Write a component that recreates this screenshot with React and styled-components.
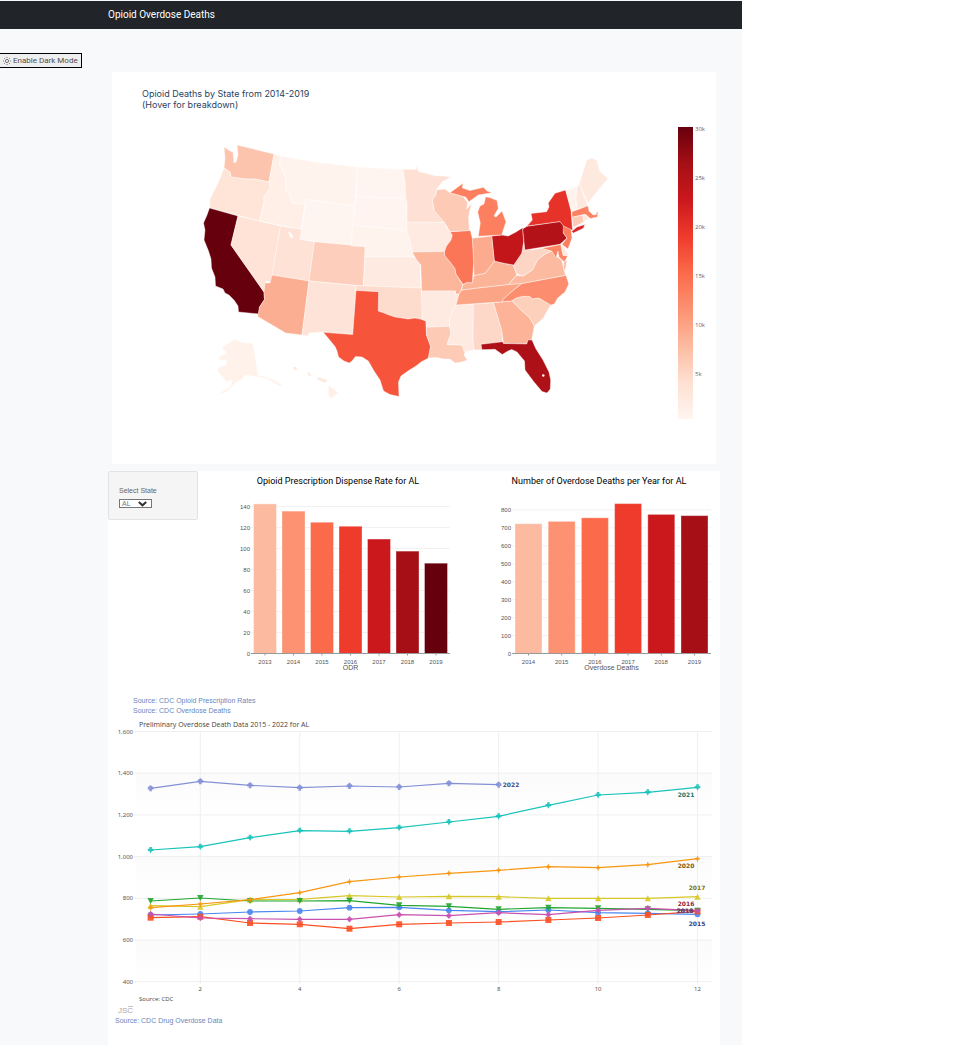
import React, { useState } from "react";
import styled, { createGlobalStyle } from "styled-components";

const GlobalStyle = createGlobalStyle`
  * { box-sizing: border-box; }
  body {
    margin: 0;
    background: #ffffff;
    font-family: "Liberation Sans", Arial, sans-serif;
  }
`;

const verdana = `"DejaVu Sans", Verdana, sans-serif`;
const noto = `"Noto Sans", "Open Sans", sans-serif`;
const openSans = `"Open Sans", "Noto Sans", sans-serif`;
const roboto = `Roboto, "Liberation Sans", sans-serif`;

const Shell = styled.div`
  display: flex;
  flex-direction: column;
  width: 100%;
  max-width: 742px;
  min-height: 100vh;
  padding-top: 1px;
  background: #f8f9fb;
`;

const NavBar = styled.header`
  display: flex;
  align-items: center;
  height: 28px;
  padding-left: 108px;
  background: #212529;
`;

const Brand = styled.h1`
  margin: 0;
  font: 400 10px/14px ${roboto};
  color: #ffffff;
`;

const Toolbar = styled.div`
  display: flex;
  padding-top: 24px;
`;

const ModeButton = styled.button`
  display: flex;
  align-items: center;
  gap: 2px;
  height: 15px;
  padding: 0 3px;
  border: 1px solid #000000;
  border-left: 0;
  background: #efefef;
  color: #4d4d4d;
  font: 400 8px/12px ${roboto};
`;

const Content = styled.main`
  display: flex;
  flex: 1;
  flex-direction: column;
  gap: 7px;
  padding: 4px 22px 0 108px;
`;

const MapCard = styled.section`
  margin: 0 4px;
  padding-top: 16px;
  background: #ffffff;
`;

const MapTitle = styled.h2`
  margin: 0 0 0 30px;
  font: 400 9px/11px Inter, "DejaVu Sans", sans-serif;
  color: #2a3f5f;
`;

const Drawing = styled.svg`
  display: block;
  width: 100%;
  height: auto;
`;

const Dashboard = styled.section`
  flex: 1;
  padding-bottom: 16px;
  background: #ffffff;
`;

const ChartRow = styled.div`
  display: grid;
  grid-template-columns: 90px 1fr 1fr;
  align-items: start;
`;

const Panel = styled.form`
  display: flex;
  flex-direction: column;
  align-items: flex-start;
  gap: 4px;
  height: 49px;
  padding: 14px 10px 0;
  border: 1px solid #e3e3e3;
  border-radius: 2px;
  background: #f5f5f5;
`;

const FieldLabel = styled.label`
  font-size: 7px;
  line-height: 9px;
  color: #666666;
`;

const SelectBox = styled.div`
  position: relative;
  width: 33px;
  height: 9px;
`;

const StateSelect = styled.select`
  display: block;
  appearance: none;
  width: 100%;
  height: 100%;
  padding: 0 2px;
  border: 1px solid #767676;
  border-radius: 0;
  background: #ffffff;
  font: 400 7px/7px "Liberation Sans", Arial, sans-serif;
  color: #777777;
`;

const Chevron = styled.svg`
  position: absolute;
  top: 2px;
  right: 5px;
  width: 9px;
  height: 6px;
  pointer-events: none;
`;

const SourceLinks = styled.nav`
  display: flex;
  flex-direction: column;
  align-items: flex-start;
  padding: ${(p) => p.$pad};
`;

const SourceLink = styled.a`
  font-size: 7px;
  line-height: 10px;
  color: #6a86bd;
  text-decoration: none;
`;

const SvgText = styled.text`
  font-family: ${(p) => p.$family || `"Liberation Sans", Arial, sans-serif`};
  font-size: ${(p) => p.$size || 6}px;
  font-weight: ${(p) => p.$weight || 400};
  text-anchor: ${(p) => p.$anchor || "middle"};
  fill: ${(p) => p.$color || "#555555"};
`;

/* Outline of every state, with its fill on the Reds scale. */
const STATES = [
  ["WA", "#fcc4ad", "224,147 230,151 233,152 234,163 236,162 238,155 237,145 274,154 269,182 255,179 245,179 231,177 230,172 224,168 225,158"],
  ["OR", "#fee5d8", "224,168 230,172 231,177 245,179 255,179 269,182 270.5,187 263.5,198 264.5,200 259.5,221 209.5,208 210,199 216,187 221,176"],
  ["CA", "#67000d", "209.5,208 238,216 231,245 264,292 264.5,299.5 259.5,307 259,314 238.5,312 238,306 234,300 229,295 225,293 223,289 215.5,286 215,277 211.5,268 211,259 208.5,251 204,240 205,230 203.5,223 207,215"],
  ["NV", "#fee3d6", "238,216 280.5,226 271,282 266,281 264,292 231,245"],
  ["ID", "#ffefe7", "274,154 280.5,156 279.5,164 283,172 286.5,180 285,190 289,193 292.5,203.5 305,204 301,229.5 259.5,221 264.5,200 263.5,198 270.5,187 269,182"],
  ["MT", "#fff3ee", "280.5,156 315,162 357.5,167 354.8,206 306,199.5 305,204 292.5,203.5 289,193 285,190 286.5,180 283,172 279.5,164"],
  ["WY", "#fff5f0", "306,199.5 354.8,206 351.5,246 300,239.5"],
  ["UT", "#fee2d5", "280.5,226 301.5,229.5 300,239.5 314.5,241.7 309,281 272,275"],
  ["CO", "#fdcebb", "314.5,241.7 365.2,246.5 363.3,286 309,281"],
  ["AZ", "#fcae92", "272,275 309,281 302,335 285.7,333 257.7,316.5 259.5,307 264.5,299.5 264,292 265,283 270,283"],
  ["NM", "#fee4d8", "309,281 356,285.5 352.7,334.5 323,332 309,333 308,336 302,335"],
  ["ND", "#fff5f0", "357.5,167 403,169.3 405,182 406.3,198.4 356.2,196.7"],
  ["SD", "#fff4ef", "356.2,196.7 406.3,198.4 407,203 407,231 403,231 398,229.5 352.6,225.3"],
  ["NE", "#fff3ed", "352.6,225.3 398,229.5 403,231 407.5,231.5 410,240 414.5,257 365,257 365.2,246.5 351.5,246"],
  ["KS", "#feeae0", "365,257 414.5,257 417,260 420,264 421,288 363.3,286"],
  ["OK", "#fddccd", "356,285.5 421,288 422.3,300 422.3,319.5 415,318 408,319 402,318 395,317 389,315 384,313 378.3,311 378.6,291.7 356,290.5"],
  ["TX", "#f6553c", "356,290.5 378.6,291.7 378.3,311 384,313 389,315 395,317 402,318 408,319 415,318 422.3,319.5 426,321 426.5,335 430.7,346.5 428.5,358 421,362 416,366 408,371 401,376 398.5,382 399,396.5 390,394.5 383.5,391 380,380 374,371 368.3,361 362,357 355.5,356.5 352,361 349.3,363 344,361 338.5,357 337,351 335,346.5 323.3,332.3 352.7,334.5"],
  ["MN", "#fee1d4", "403,169.3 416,169.3 416.3,165.7 418.5,171.5 425,173 435,175.7 443,176 451,177 442,182 436.5,189.5 436,195 432.3,200 434,210 444.3,222.3 407,222.3 407,203 405.8,198 405,182"],
  ["IA", "#feeae0", "407,222.3 444.3,222.3 446.7,228 452.3,235 451,240 446.5,246 444.5,251.5 412.3,252 410,240 407,231"],
  ["MO", "#fcb69b", "412.3,252 444.5,251.5 445,256 450,262 455,268.5 456,274 462.7,285 460,293.5 455.5,294.5 455.5,291 421.7,291 420.8,265 416,259"],
  ["AR", "#feeae1", "421.3,291 455.5,291 455.5,294.5 459,294.3 456,305 452,312 449.3,320 449.6,326.3 426.3,327.3 426,321 422.3,319.5"],
  ["LA", "#fdcab5", "426.3,327.3 449.6,326.3 451,333.5 447,344.5 462,345 465,352 464,355 467.3,360 462,362 455,363 450,359 443,359 437,357.5 428.3,358 430.7,346.5 426.5,335"],
  ["MS", "#feeae1", "456,305 473.3,304 473,340 474.2,350 464.3,352 462,345 447,344.5 451,333.5 449.6,326.3 449.3,320 452,312"],
  ["AL", "#fdd8c8", "473.3,304 493.5,302.8 501.7,330 502.5,342 481.5,344 482.3,349.7 474.2,350 473,340"],
  ["GA", "#fcb398", "493.5,302.8 511.7,300.8 522,311 530,318 534.3,326 531.7,340 527.5,341 526.7,344 503.5,343 501.7,330"],
  ["FL", "#ad1117", "481,344.3 502.5,341.8 503.5,343.5 526.7,344 528,340 532,340 536,349 543,360 549,372 550.7,380 550.3,389 547,393 542,391.5 534,382 525,370 524.5,361 517,352 511.7,349.5 508,351 502.3,354.5 495,349.3 482,349.7"],
  ["SC", "#fdd0bc", "511.7,300.8 516,298 523,296.3 530,296.5 532.3,298.8 539,298 550.7,305 546,313 543.5,318 534.3,326 530,318 522,311"],
  ["NC", "#fc8d6e", "502.7,299.5 510,293 521.7,283.5 566,275.3 568.8,284 565,292 557.7,298 554.3,304 550.7,305 539,298 532.3,298.8 530,296.5 523,296.3 516,298 511.7,300.8 502.7,301.8"],
  ["TN", "#fca486", "461.7,290 475,288.3 508.3,284.5 521.7,283.3 510,293 502.7,299.5 502.7,301.8 456,305 459,294.3"],
  ["KY", "#fcb499", "462.7,285 467,282.5 472.3,282.7 474,275.5 485,273.3 490,267 494.3,261 505,263.5 513.3,265 516.7,275 508.3,284.5 475,288.3 461.7,290"],
  ["VA", "#fcbaa0", "508.3,284.5 516.7,275.5 523.3,276 532.3,270 537.5,260 545,254 551.7,251 556,256 561.7,260 563,266 565.5,275.3 521.7,283.5"],
  ["WV", "#fdd5c4", "523,243 524.5,250 534.3,249.5 541.7,248.3 551.7,251 545,254 537.5,260 532.3,270 523.3,276 516.7,274 513.3,265 519,256"],
  ["OH", "#c2161b", "491.7,236 501.7,235 508.3,236 516,232 522.7,227.7 523.7,241.7 521.7,253.3 513.8,265 505,263.5 494.3,261"],
  ["IN", "#fcab8f", "472.3,238.3 491.7,236 494.3,261 490,267 485,273.3 474,275.5 473.5,262"],
  ["IL", "#fb7656", "450,231.7 470.3,230.4 472.3,238.3 473.7,262 472.3,282.7 467,282.5 463,284.5 456,274 455,268.5 450,262 445,256 444.5,251.5 446.5,246 451,240 452.3,235"],
  ["WI", "#fdcab5", "436.5,190 445,189 450,192.7 463.3,196.7 467.7,203 466.7,209 471.7,203.5 469.5,212 468.5,218 469.5,230.5 450,231.7 444.3,222.3 434.5,211 432.3,200 436,195"],
  ["MI", "#fc7f5f", "450,192.7 463,183.3 462.3,188 470,190.5 483.5,187.3 487,191 492.3,192.7 478.3,195 469,201.7 465.7,197 463.3,196.5"],
  ["MI-lower", "#fc7f5f", "485.7,196.7 491,198 497,200.5 498.3,208.3 494,216 496,217 502,211 506,221.7 501.7,235 478.3,236.3 480.3,223 477.7,212 480,206 484,204"],
  ["PA", "#b31218", "522.7,229 527,226.2 560,221.5 565,226.5 563.3,233 567,238 560,244.3 524.8,250"],
  ["NY", "#e63228", "527,226 532.3,220 531,213.5 546.7,211.7 549,207 548.3,203 555,193.3 565.7,190 571,210 572.5,230 570,230 563.3,226 560,221.5"],
  ["LI", "#d9262b", "571.5,231.5 577,227 584.8,224.5 583.5,228.2 573.5,233"],
  ["VT", "#fff3ee", "565.7,190 577.3,186.7 576,197 577.3,209 571.3,211"],
  ["NH", "#fee7dc", "577.3,186.7 579.3,183.3 586.7,203.3 587.3,206 577.3,209 576,197"],
  ["ME", "#fee9df", "579.3,183.3 583.3,171 586.7,160 591.7,158 596.7,160 600,171.7 608.3,178.5 598.3,190 587.7,203.5"],
  ["MA", "#fc8161", "572,211.7 588,205.8 589,211 593,215 596.5,214.5 596.2,211.7 597.8,212.5 597.5,217 590.5,218.5 585,214.3 572,217.3"],
  ["CT", "#fdcbb6", "572,217.3 582.7,215 584,221.7 573.3,227.5"],
  ["RI", "#feeae0", "582.7,215 586.7,215 589,218.5 584,221.7"],
  ["NJ", "#fc7e5e", "563.3,226 571,229.5 572,238 568,249 562,244.5 567,238 563.3,233"],
  ["DE", "#feeae0", "561,245 564,247 568.3,254 567,256 563.5,255.3"],
  ["MD", "#fc8565", "541.7,248.3 560.7,244.5 563,255.5 567.7,256 564.5,262 559,257 558,251 556,258 551.7,251"],
  ["VA-east", "#fcbaa0", "564,261.5 567,260.5 565,271 563.5,268"],
  ["AK", "#fff2eb", "235,339.3 243,342.7 252.7,343.3 258.3,375 266.7,377 273,379 282.3,385 280,386.5 268,379 257,376.7 245,375 241,380 236.7,381.7 226.7,391.7 216.7,395 231,386 232,380 226,382 222,376 217,371 219,367 226,365 226.7,360 220,360 218.3,356.7 226.7,353.3 221.7,347.3"],
  ["HI-1", "#ffe8dd", "292.5,367.5 296,366.5 297.5,369 295,370.5"],
  ["HI-2", "#ffe8dd", "307,372 309.5,372.5 312,376.5 308.5,376"],
  ["HI-3", "#ffe8dd", "316.5,377 322,378 328,380.5 325,383 319,380.5"],
  ["HI-4", "#ffefe7", "328.5,386 334,389 338.5,393 331,398.7 328.5,396"],
];

const REDS = ["#67000d", "#a50f15", "#cb181d", "#ef3b2c", "#fb6a4a", "#fc9272", "#fcbba1", "#fee0d2", "#fff5f0"];

function StateMap() {
  const ticks = ["30k", "25k", "20k", "15k", "10k", "5k"];
  return (
    <Drawing viewBox="112 110 604 354" role="img" aria-label="Opioid deaths by state">
      <defs>
        <linearGradient id="reds" x1="0" y1="0" x2="0" y2="1">
          {REDS.map((c, i) => (
            <stop key={c} offset={i / 8} stopColor={c} />
          ))}
        </linearGradient>
      </defs>
      {STATES.map(([id, fill, points]) => (
        <polygon key={id} points={points} fill={fill} stroke="#ffffff" strokeOpacity="0.6" strokeWidth="0.7" strokeLinejoin="round" />
      ))}
      <polygon points="288,231.5 290,232 292.5,235 292.5,239 290,237" fill="#ffffff" />
      <circle cx="543.3" cy="375.5" r="1.2" fill="#ffffff" />
      <rect x="678" y="127" width="15" height="292" fill="url(#reds)" />
      {ticks.map((t, i) => (
        <SvgText key={t} x={695} y={131 + i * 49} $anchor="start" $family={openSans} $color="#5b6778">
          {t}
        </SvgText>
      ))}
    </Drawing>
  );
}

/* Both bar charts share one frame; the base line is at y 182 of a 261 x 222 box. */
function BarChart({ title, titleX, axisX, axisEnd, first, step, barWidth, bars, max, every, unit, label }) {
  const base = 182.5;
  const ticks = [];
  for (let v = 0; v <= max; v += every) ticks.push(v);
  const center = (i) => first + i * step + barWidth / 2;
  return (
    <Drawing viewBox="0 0 261 222" role="img" aria-label={title}>
      <SvgText x={titleX} y={13} $size={9} $family={roboto} $color="#000000">{title}</SvgText>
      {ticks.map((v) => (
        <g key={v}>
          <line x1={axisX} x2={axisEnd} y1={base - v * unit} y2={base - v * unit} stroke="#f1f1f1" />
          <SvgText x={axisX - 1} y={base + 2 - v * unit} $anchor="end">{v}</SvgText>
        </g>
      ))}
      {bars.map(([year, value, color], i) => (
        <g key={year}>
          <rect x={first + i * step} y={base - value * unit} width={barWidth} height={value * unit} fill={color} stroke="#ffffff" strokeOpacity="0.35" />
          <line x1={center(i)} x2={center(i)} y1={base} y2={base + 2} stroke="#999999" />
          <SvgText x={center(i)} y={193}>{year}</SvgText>
        </g>
      ))}
      <line x1={axisX} x2={axisEnd} y1={base} y2={base} stroke="#999999" />
      <SvgText x={(axisX + axisEnd) / 2} y={199} $size={7}>{label}</SvgText>
    </Drawing>
  );
}

const RATE_BARS = [
  ["2013", 142.5, "#fcbba1"],
  ["2014", 135.6, "#fc9272"],
  ["2015", 125, "#fb6a4a"],
  ["2016", 121.2, "#ef3b2c"],
  ["2017", 109, "#cb181d"],
  ["2018", 97.5, "#a50f15"],
  ["2019", 86, "#67000d"],
];

const DEATH_BARS = [
  ["2014", 723, "#fcbba1"],
  ["2015", 736, "#fc9272"],
  ["2016", 756, "#fb6a4a"],
  ["2017", 835, "#ef3b2c"],
  ["2018", 775, "#cb181d"],
  ["2019", 768, "#a50f15"],
];

/* Monthly series, as heights in the chart's own units. */
const SERIES = [
  { mark: "circle", color: "#4a86f0", ys: [915, 914, 912, 911, 907.7, 907.3, 910.3, 911.7, 910, 912.7, 913.3, 914.3] },
  { mark: "square", color: "#fb4f22", ys: [917.7, 916.7, 923, 924.3, 928.7, 924.3, 923, 922, 920, 918, 915, 911.3] },
  { mark: "up", color: "#d6c827", ys: [905.7, 906.7, 899.7, 899.3, 895.7, 897, 896.3, 896.7, 898.3, 898.3, 898.3, 896.7] },
  { mark: "down", color: "#21a52f", ys: [901, 898, 901, 901, 900.7, 905.3, 906.3, 909.3, 907.7, 908.3, 909.3, 910.7] },
  { mark: "diamond", color: "#c850ae", ys: [914, 918, 918.7, 919.3, 919.3, 914.7, 915.7, 912.7, 914.7, 910.3, 908.3, 910.7] },
  { mark: "star", color: "#f7960f", ys: [907.7, 904, 899.7, 892.7, 881.7, 877, 873.3, 870.3, 866.7, 867.7, 864.7, 858.7] },
  { mark: "arrowDown", color: "#18c3bb", ys: [850, 846.7, 837.7, 830.7, 831.3, 827.7, 822, 816.3, 805.3, 795, 792.3, 787.3] },
  { mark: "arrowUp", color: "#8390d6", ys: [788.3, 781.3, 785.3, 787.7, 786, 787, 783.3, 784.7] },
];

const MARKS = {
  square: "M-3-3H3V3H-3Z",
  up: "M0-3L3.2 3H-3.2Z",
  down: "M0 3L3.2-3H-3.2Z",
  diamond: "M0-3.3L3 0L0 3.3L-3 0Z",
  star: "M0-3.2L1 -1L3 0L1 1L0 3.2L-1 1L-3 0L-1-1Z",
  arrowDown: "M-1.3-3H1.3V-1.3H2.8V1H1.3L0 3.4L-1.3 1H-2.8V-1.3H-1.3Z",
  arrowUp: "M0-3.4L2.8-1V1.3H1.3V3H-1.3V1.3H-2.8V-1Z",
};

const YEAR_LABELS = [
  ["2022", 511, 787, "#414a80"],
  ["2021", 686, 797, "#12756f"],
  ["2020", 686, 868, "#7d5510"],
  ["2017", 697, 890, "#787013"],
  ["2016", 686, 906, "#8a2640"],
  ["2018", 685, 913, "#1c5a30"],
  ["2019", 685, 913, "#8a2f70"],
  ["2015", 697, 926, "#343c84"],
];

function TrendChart() {
  const rows = [0, 1, 2, 3, 4, 5, 6].map((i) => ({ y: 731.5 + i * 41.7, label: (1600 - i * 200).toLocaleString("en-US") }));
  const x = (month) => 150.6 + (month - 1) * 49.72;
  return (
    <Drawing viewBox="108 716 612 298" role="img" aria-label="Preliminary overdose deaths by month">
      <defs>
        <linearGradient id="band" x1="0" y1="0" x2="0" y2="1">
          <stop offset="0" stopColor="#fbfbfb" />
          <stop offset="1" stopColor="#ffffff" />
        </linearGradient>
      </defs>
      <SvgText x={139} y={727} $size={7} $anchor="start" $family={openSans} $color="#444444">
        Preliminary Overdose Death Data 2015 - 2022 for AL
      </SvgText>
      {[1, 3, 5].map((i) => (
        <rect key={i} x="136" y={rows[i].y} width="576" height="41.7" fill="url(#band)" />
      ))}
      {rows.map((r) => (
        <g key={r.label}>
          <line x1="134" x2="712" y1={r.y} y2={r.y} stroke="#efefef" />
          <SvgText x={133} y={r.y + 2} $anchor="end" $family={noto}>{r.label}</SvgText>
        </g>
      ))}
      {[2, 4, 6, 8, 10, 12].map((m) => (
        <g key={m}>
          <line x1={x(m)} x2={x(m)} y1="731.5" y2="984" stroke="#efefef" />
          <SvgText x={x(m)} y={991} $family={noto}>{m}</SvgText>
        </g>
      ))}
      {SERIES.map((s) => (
        <g key={s.mark} fill={s.color} fillOpacity="0.9">
          <polyline points={s.ys.map((y, i) => `${x(i + 1)},${y}`).join(" ")} fill="none" stroke={s.color} strokeWidth="1.2" />
          {s.ys.map((y, i) =>
            s.mark === "circle" ? (
              <circle key={i} cx={x(i + 1)} cy={y} r="2.9" />
            ) : (
              <path key={i} d={MARKS[s.mark]} transform={`translate(${x(i + 1)} ${y})`} />
            )
          )}
        </g>
      ))}
      {YEAR_LABELS.map(([t, lx, ly, c]) => (
        <SvgText key={t} x={lx} y={ly} $weight={700} $family={verdana} $color={c}>{t}</SvgText>
      ))}
      <SvgText x={139} y={1001} $anchor="start" $family={openSans} $color="#444444">Source: CDC</SvgText>
      <SvgText x={118} y={1013} $size={8} $anchor="start" $color="#a8a8a8">JSC</SvgText>
      <path d="M128 1006.5h5" stroke="#c4c4c4" strokeWidth="1" />
    </Drawing>
  );
}

export default function App() {
  const [state, setState] = useState("AL");
  return (
    <Shell>
      <GlobalStyle />
      <NavBar>
        <Brand>Opioid Overdose Deaths</Brand>
      </NavBar>
      <Toolbar>
        <ModeButton type="button">
          <svg width="8" height="8" viewBox="0 0 8 8" fill="none" stroke="#555555" strokeWidth="0.8" aria-hidden="true">
            <circle cx="4" cy="4" r="1.6" />
            <path d="M4 0V1M4 7V8M0 4H1M7 4H8M1 1l.8.8M6.200 6.200l.8.8M7 1l-.8.8M1.800 6.200l-.8.8" />
          </svg>
          Enable Dark Mode
        </ModeButton>
      </Toolbar>
      <Content>
        <MapCard>
          <MapTitle>
            Opioid Deaths by State from 2014-2019
            <br />
            (Hover for breakdown)
          </MapTitle>
          <StateMap />
        </MapCard>
        <Dashboard>
          <ChartRow>
            <Panel>
              <FieldLabel htmlFor="state">Select State</FieldLabel>
              <SelectBox>
                <StateSelect id="state" value={state} onChange={(e) => setState(e.target.value)}>
                  <option>AL</option>
                </StateSelect>
                <Chevron viewBox="0 0 9 6" fill="none" stroke="#333333" strokeWidth="2" aria-hidden="true">
                  <path d="M0.800 1L4.500 4.300L8.200 1" />
                </Chevron>
              </SelectBox>
            </Panel>
            <BarChart
              title={`Opioid Prescription Dispense Rate for ${state}`}
              titleX={140}
              axisX={53}
              axisEnd={252}
              first={55.5}
              step={28.5}
              barWidth={23}
              bars={RATE_BARS}
              max={140}
              every={20}
              unit={1.05}
              label="ODR"
            />
            <BarChart
              title={`Number of Overdose Deaths per Year for ${state}`}
              titleX={140}
              axisX={53}
              axisEnd={252}
              first={56}
              step={33.2}
              barWidth={27}
              bars={DEATH_BARS}
              max={800}
              every={100}
              unit={0.1795}
              label="Overdose Deaths"
            />
          </ChartRow>
          <SourceLinks $pad="3px 0 0 25px" aria-label="Bar chart sources">
            <SourceLink href="#rates">Source: CDC Opioid Prescription Rates</SourceLink>
            <SourceLink href="#deaths">Source: CDC Overdose Deaths</SourceLink>
          </SourceLinks>
          <TrendChart />
          <SourceLinks $pad="2px 0 0 7px" aria-label="Trend chart source">
            <SourceLink href="#drug-data">Source: CDC Drug Overdose Data</SourceLink>
          </SourceLinks>
        </Dashboard>
      </Content>
    </Shell>
  );
}
